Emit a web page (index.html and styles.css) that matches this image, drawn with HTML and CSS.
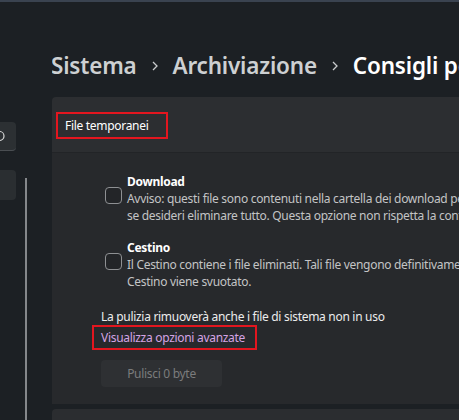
FILE: index.html
```html
<!DOCTYPE html>
<html lang="it">
<head>
<meta charset="utf-8">
<title>Archiviazione - Consigli per la pulizia</title>
<link rel="stylesheet" href="styles.css">
</head>
<body>
<div class="topline"></div>
<div class="app">
  <aside class="sidebar">
    <div class="search">
      <svg class="search-icon" width="16" height="28" viewBox="0 0 16 28"><circle cx="-0.5" cy="14" r="4.5" fill="none" stroke="#dcdcdc" stroke-width="1.2"/></svg>
    </div>
    <div class="nav-item"></div>
  </aside>
  <main class="main">
    <div class="breadcrumb">
      <span class="crumb">Sistema</span>
      <svg class="chev" width="6" height="10" viewBox="0 0 6 10"><polyline points="1,1 5,5 1,9" fill="none" stroke="#c9cbcd" stroke-width="1.3"/></svg>
      <span class="crumb">Archiviazione</span>
      <svg class="chev" width="6" height="10" viewBox="0 0 6 10"><polyline points="1,1 5,5 1,9" fill="none" stroke="#c9cbcd" stroke-width="1.3"/></svg>
      <span class="crumb current">Consigli per la pulizia</span>
    </div>
    <section class="card">
      <div class="card-header">
        <div class="redbox">File temporanei</div>
      </div>
      <div class="card-body">
        <div class="option">
          <div class="checkbox"></div>
          <div class="opt-text">
            <div class="opt-title">Download</div>
            <div class="opt-desc">Avviso: questi file sono contenuti nella cartella dei download personale. Selezionala</div>
            <div class="opt-desc">se desideri eliminare tutto. Questa opzione non rispetta la configurazione di Sensore memoria.</div>
          </div>
        </div>
        <div class="option second">
          <div class="checkbox"></div>
          <div class="opt-text">
            <div class="opt-title">Cestino</div>
            <div class="opt-desc">Il Cestino contiene i file eliminati. Tali file vengono definitivamente rimossi quando il</div>
            <div class="opt-desc">Cestino viene svuotato.</div>
          </div>
        </div>
        <p class="note">La pulizia rimuoverà anche i file di sistema non in uso</p>
        <div class="link-box"><span class="link">Visualizza opzioni avanzate</span></div>
        <div class="button">Pulisci 0 byte</div>
      </div>
    </section>
    <div class="next-card"></div>
  </main>
</div>
<div class="scrollbar"></div>
</body>
</html>
```
FILE: styles.css
```css
html, body {
  margin: 0;
  padding: 0;
}
body {
  width: 459px;
  height: 420px;
  overflow: hidden;
  background: #1c2024;
  font-family: "Segoe UI", "Noto Sans", sans-serif;
  letter-spacing: -0.3px;
  position: relative;
}
.topline {
  height: 2px;
  background: #3a4350;
}
.app {
  display: flex;
  height: 418px;
}
.sidebar {
  width: 52px;
  flex: none;
  padding-top: 120px;
  box-sizing: border-box;
}
.search {
  width: 16px;
  height: 28px;
  background: #2c3033;
  border-radius: 0 4px 4px 0;
  border-bottom: 1px solid #4a4e52;
  overflow: hidden;
}
.search-icon {
  display: block;
}
.nav-item {
  margin-top: 19px;
  width: 16px;
  height: 30px;
  background: #2a2e31;
  border-radius: 0 4px 4px 0;
}
.scrollbar {
  position: absolute;
  left: 25px;
  top: 178px;
  width: 2px;
  height: 242px;
  background: #84878a;
}
.main {
  flex: 1;
  min-width: 0;
  overflow: hidden;
}
.breadcrumb {
  margin-top: 48px;
  height: 32px;
  display: flex;
  align-items: center;
  white-space: nowrap;
  font-size: 22.5px;
  font-weight: 600;
  letter-spacing: -0.2px;
  line-height: 32px;
  color: #cdd0d2;
  margin-left: -1px;
}
.chev {
  margin: 0 15px 0 15px;
  flex: none;
}
.crumb.current {
  color: #ffffff;
}
.card {
  margin-top: 15px;
  width: 480px;
}
.card-header {
  height: 56px;
  background: #2c2e31;
  border-radius: 4px 0 0 0;
  border-bottom: 1px solid #222427;
  display: flex;
  align-items: center;
  padding-left: 4px;
  box-sizing: border-box;
}
.redbox {
  height: 27px;
  box-sizing: border-box;
  border: 2px solid #e3161f;
  padding: 0 17px 0 7px;
  margin-top: 2px;
  display: flex;
  align-items: center;
  font-size: 12px;
  color: #ffffff;
}
.card-body {
  background: #27292c;
  padding: 20px 0 17px 49px;
}
.option {
  display: flex;
  align-items: flex-start;
  gap: 5px;
  margin-left: 4px;
  white-space: nowrap;
}
.option.second {
  margin-top: 15px;
}
.checkbox {
  width: 17px;
  height: 17px;
  margin-top: 14px;
  box-sizing: border-box;
  border: 1px solid #8e9093;
  border-radius: 4px;
  background: #232528;
  flex: none;
}
.opt-title {
  font-size: 12px;
  font-weight: 700;
  line-height: 17px;
  color: #ffffff;
}
.opt-desc {
  font-size: 12px;
  line-height: 17px;
  color: #c3c4c5;
}
.note {
  margin: 19px 0 0 0;
  font-size: 12px;
  line-height: 16px;
  color: #ececec;
  white-space: nowrap;
}
.link-box {
  display: inline-flex;
  align-items: center;
  height: 25px;
  box-sizing: border-box;
  border: 2px solid #e3161f;
  padding: 0 10px 0 7px;
  margin: -2px 0 0 -9px;
}
.link {
  font-size: 12px;
  color: #d4a4e4;
}
.button {
  margin-top: 10px;
  width: 121px;
  height: 27px;
  background: #2e3033;
  border-radius: 4px;
  display: flex;
  align-items: center;
  justify-content: center;
  font-size: 12px;
  color: #7b7c7d;
}
.next-card {
  margin-top: 5px;
  height: 20px;
  width: 480px;
  background: #2b2d30;
  border-radius: 4px 0 0 0;
}
```
